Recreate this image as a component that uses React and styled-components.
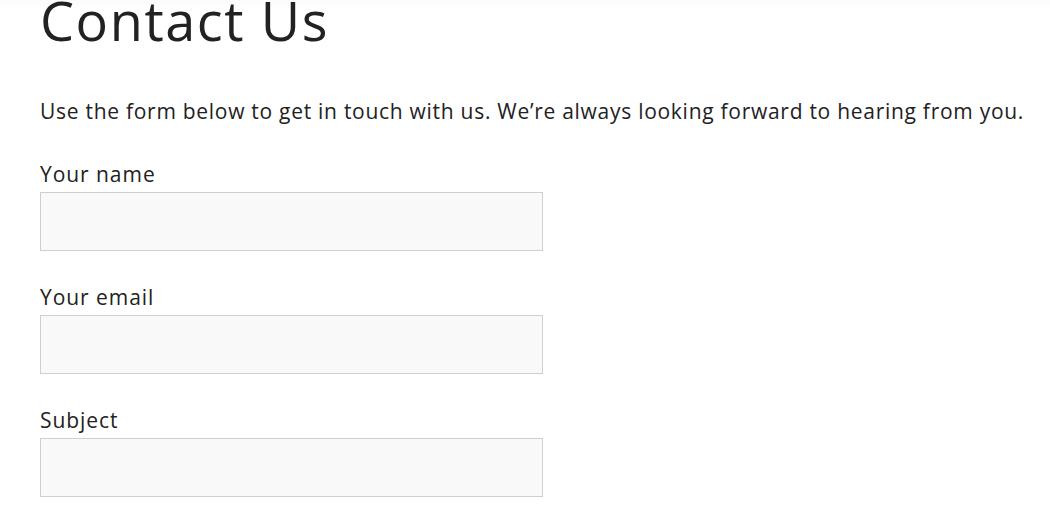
import React from "react";
import styled, { createGlobalStyle } from "styled-components";

const GlobalStyle = createGlobalStyle`
  html, body {
    margin: 0;
    padding: 0;
    background: #fff;
    overflow: hidden;
  }
  body {
    font-family: "Open Sans", "Liberation Sans", sans-serif;
    color: #222;
  }
`;

const fields = [
  { id: "name", label: "Your name" },
  { id: "email", label: "Your email" },
  { id: "subject", label: "Subject" },
];

function App() {
  return (
    <>
      <GlobalStyle />
      <Page>
        <TopShade />
        <Title>Contact Us</Title>
        <Intro>
          Use the form below to get in touch with us. We’re always looking
          forward to hearing from you.
        </Intro>
        <Form>
          {fields.map((f) => (
            <Field key={f.id}>
              <Label htmlFor={f.id}>{f.label}</Label>
              <Input id={f.id} type="text" />
            </Field>
          ))}
        </Form>
      </Page>
    </>
  );
}

export default App;

const Page = styled.div`
  position: relative;
  padding: 0 40px;
  height: 517px;
  overflow: hidden;
`;

const TopShade = styled.div`
  position: absolute;
  top: 0;
  left: 0;
  right: 0;
  height: 10px;
  background: linear-gradient(#fbfbfb, #fff);
`;

const Title = styled.h1`
  position: relative;
  margin: -12px 0 0;
  font-size: 54px;
  font-weight: 400;
  line-height: 1.2;
  letter-spacing: 1.6px;
  color: #222;
`;

const Intro = styled.p`
  margin: 43px 0 0;
  font-size: 21px;
  line-height: 30px;
  letter-spacing: 0.72px;
  color: #222;
  white-space: nowrap;
`;

const Form = styled.form`
  display: flex;
  flex-direction: column;
  gap: 33px;
  margin-top: 35px;
`;

const Field = styled.div`
  display: flex;
  flex-direction: column;
  gap: 4px;
`;

const Label = styled.label`
  font-size: 21px;
  line-height: 27px;
  letter-spacing: 0.95px;
  color: #222;
`;

const Input = styled.input`
  box-sizing: border-box;
  width: 503px;
  height: 59px;
  margin: 0;
  padding: 0 12px;
  border: 1px solid #cfcfcf;
  background: #f9f9f9;
  font: inherit;
  outline: none;
`;
